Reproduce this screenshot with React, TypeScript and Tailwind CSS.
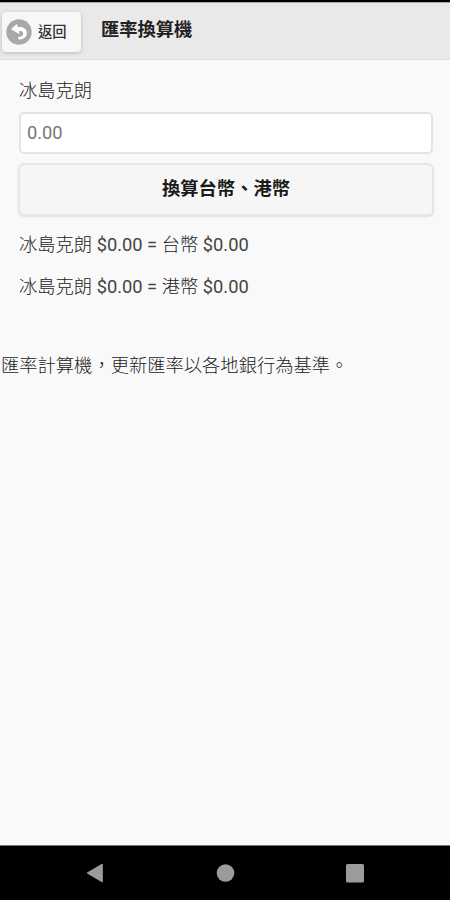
import React from "react";

function BackIcon() {
  return (
    <svg viewBox="0 0 26 26" className="h-[26px] w-[26px] shrink-0">
      <circle cx="13" cy="13" r="12.7" fill="#a8a8a8" />
      <path d="M5 10.2 L10.6 5 L12 8.2 C17.4 7.4 20.8 10.2 20.8 14 C20.8 18 17.6 20.8 12.4 20.4 V17.8 C15.6 17.8 17.2 16.4 17.2 14.4 C17.2 12.4 15.6 11.6 12.8 12 L13.6 15.2 Z" fill="#fff" />
    </svg>
  );
}

function Result({ currency }: { currency: string }) {
  return (
    <p className="mt-[15px] h-[27px] whitespace-nowrap leading-[27px]">
      冰島克朗<span className="font-normal text-[#444]"> $0.00 = </span>{currency}<span className="font-normal text-[#444]"> $0.00</span>
    </p>
  );
}

export default function App() {
  return (
    <div className="flex h-[900px] w-[450px] flex-col overflow-hidden bg-[#f9f9f9] font-[Roboto,'Noto_Sans_CJK_TC',sans-serif] text-[18.3px] font-light text-[#222]">
      <div className="h-0.5 shrink-0 bg-black" />
      <header className="flex h-[58px] shrink-0 items-start border-b border-t border-b-[#dddddd] border-t-[#aaa] bg-[#e9e9e9]">
        <button className="ml-0.5 mt-[9px] flex h-[40px] w-[79px] items-center rounded-[4px] bg-[#f7f7f7] pl-1 shadow-[0_1px_4px_rgba(0,0,0,0.2)]">
          <BackIcon />
          <span className="-mt-px ml-[6px] whitespace-nowrap text-[14.3px] font-medium leading-5 text-[#333]">返回</span>
        </button>
        <h1 className="ml-[20px] mt-[13px] whitespace-nowrap font-bold leading-[27px]">匯率換算機</h1>
      </header>
      <main className="flex-1">
        <div className="px-[19px] pt-[17px]">
          <label className="block h-[27px] leading-[27px]">冰島克朗</label>
          <input
            className="mt-[8px] block h-[42px] w-[414px] rounded-[5px] border-2 border-[#e4e4e4] bg-white px-[6px] pb-[1px] text-[18.3px] font-normal outline-none placeholder:text-[#777] placeholder:opacity-100"
            placeholder="0.00"
          />
          <button className="-mx-px mt-[9px] block h-[53px] w-[416px] rounded-[6px] border-2 border-[#e6e6e6] bg-[#f6f6f6] pb-[1px] font-bold text-[#1a1a1a] shadow-[0_1px_2px_rgba(0,0,0,0.1)]">
            換算台幣、港幣
          </button>
          <Result currency="台幣" />
          <Result currency="港幣" />
        </div>
        <p className="ml-px mt-[52px] whitespace-nowrap leading-[27px]">匯率計算機，更新匯率以各地銀行為基準。</p>
      </main>
      <nav className="h-[55px] shrink-0 border-t border-[#777] bg-black">
        <svg viewBox="0 0 450 54" className="block h-[54px] w-[450px]" fill="#9b9b9b">
          <path d="M87.2 27 L102.3 18.1 V35.9 Z" stroke="#9b9b9b" strokeWidth="1" strokeLinejoin="round" />
          <circle cx="225.5" cy="27" r="8.8" />
          <rect x="346" y="18" width="18" height="18.5" rx="1.5" />
        </svg>
      </nav>
    </div>
  );
}
